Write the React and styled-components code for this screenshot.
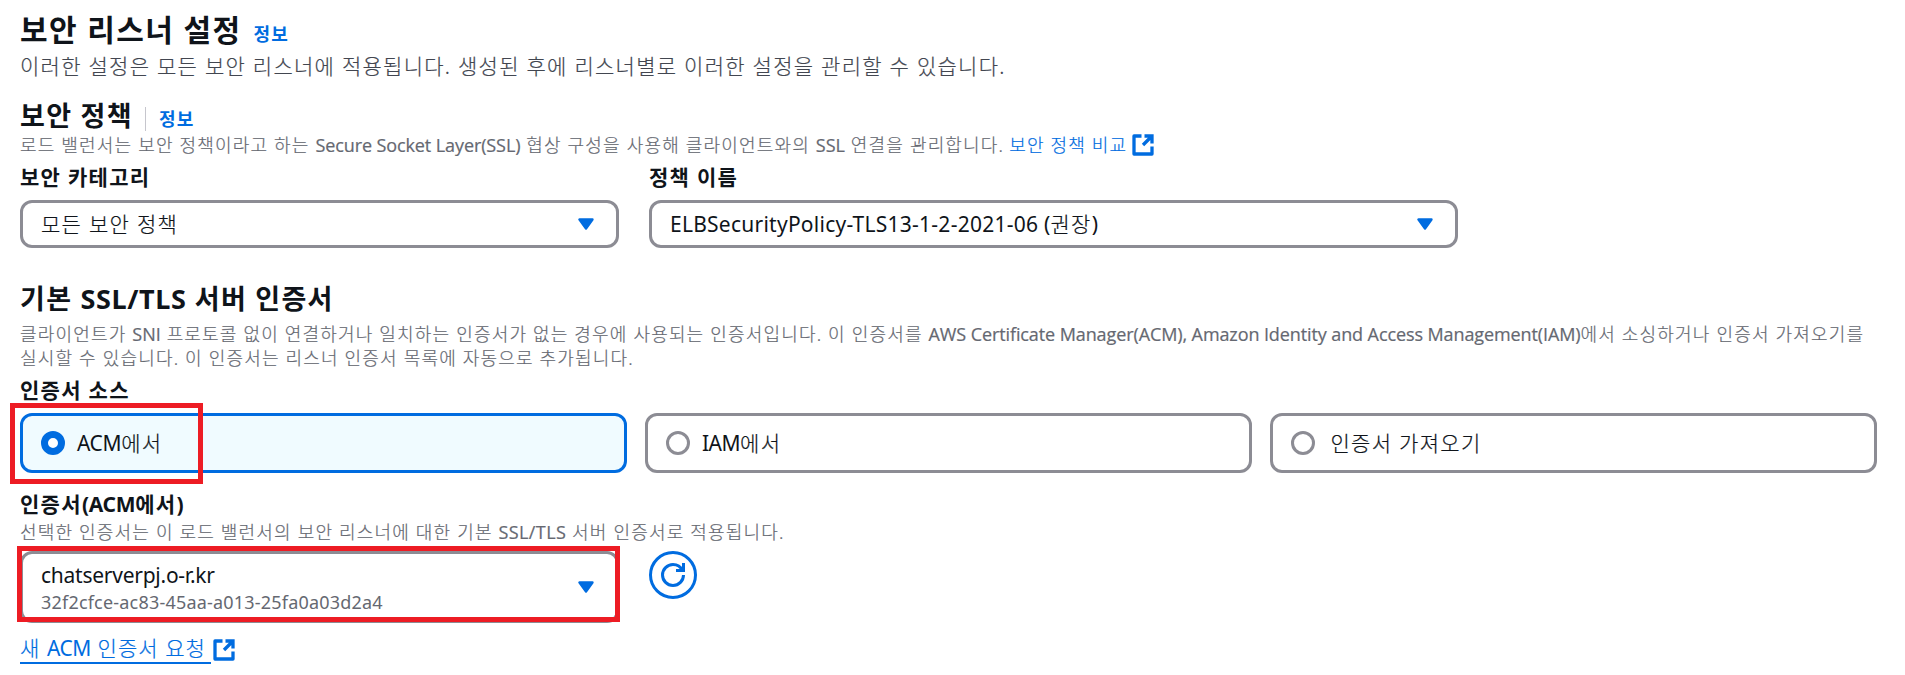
import React from 'react';
import styled, { createGlobalStyle } from 'styled-components';

const c = {
  text: '#0f141a',
  body: '#424650',
  muted: '#656871',
  blue: '#006ce0',
  line: '#8c8c94',
  mark: '#ed1c24',
};

const Global = createGlobalStyle`
  * { box-sizing: border-box; }
  body {
    margin: 0;
    background: #fff;
    color: ${c.text};
    font-family: "Noto Sans", "Noto Sans CJK KR", sans-serif;
  }
`;

const Page = styled.main`
  width: 1905px;
  height: 675px;
  padding: 12px 28px 0 20px;
  overflow: hidden;
  white-space: nowrap;
`;

const HeaderRow = styled.header`
  display: flex;
  align-items: baseline;
  gap: ${(p) => p.$gap}px;
  margin-top: ${(p) => p.$top || 0}px;
`;

const Title = styled.h1`
  margin: 0;
  font-size: 30px;
  line-height: 36px;
  font-weight: 700;
  letter-spacing: 1.4px;
`;

const Subtitle = styled.h2`
  margin: ${(p) => p.$top || 0}px 0 0;
  font-size: 27px;
  line-height: 30px;
  font-weight: 700;
  letter-spacing: 1.3px;
`;

const InfoLink = styled.a`
  color: ${c.blue};
  font-size: 18px;
  line-height: 24px;
  font-weight: 700;
  letter-spacing: 1.2px;
`;

const Divider = styled.span`
  align-self: flex-end;
  width: 1px;
  height: 24px;
  margin: 0 13px 0 12px;
  background: #c6c6cd;
`;

const Lead = styled.p`
  margin: 3px 0 0;
  color: ${c.body};
  font-size: 21px;
  line-height: 30px;
  font-weight: 300;
  letter-spacing: 1.27px;
  -webkit-text-stroke: 0.2px currentColor;
`;

const Note = styled.p`
  display: ${(p) => (p.$inline ? 'flex' : 'block')};
  align-items: center;
  margin: ${(p) => p.$top || 0}px 0 0;
  color: ${c.muted};
  font-size: 18px;
  line-height: 24px;
  font-weight: 300;
  letter-spacing: 1.18px;
  -webkit-text-stroke: 0.2px currentColor;
`;

const Latin = styled.span`
  font-weight: ${(p) => p.$weight || 400};
  letter-spacing: ${(p) => p.$track || 0}px;
  -webkit-text-stroke: 0;
`;

const NoteLatin = styled(Latin)`
  font-family: "Open Sans", "Noto Sans", sans-serif;
  -webkit-text-stroke: 0.2px currentColor;
`;

const NoteLink = styled.a`
  display: inline-flex;
  align-items: center;
  gap: 4px;
  margin-left: 5px;
  color: ${c.blue};
`;

const Label = styled.div`
  margin: ${(p) => p.$top}px 0 0;
  font-size: 21px;
  line-height: 30px;
  font-weight: 700;
  letter-spacing: 1.3px;
`;

const Fields = styled.div`
  display: flex;
  gap: 30px;
  margin-top: ${(p) => p.$top || 0}px;
`;

const Field = styled.div`
  width: ${(p) => p.$w}px;
`;

const SelectBox = styled.div`
  display: flex;
  align-items: center;
  justify-content: space-between;
  height: ${(p) => (p.$tall ? 72 : 48)}px;
  margin-top: ${(p) => (p.$tall ? 0 : 8)}px;
  padding: 0 22px 0 18px;
  border: 3px solid ${c.line};
  border-radius: 12px;
`;

const Value = styled.span`
  display: block;
  padding-bottom: ${(p) => (p.$flush ? 0 : 1)}px;
  font-size: 21px;
  line-height: 30px;
  font-weight: 300;
  letter-spacing: 1.3px;
  -webkit-text-stroke: 0.2px currentColor;
`;

const SubValue = styled.span`
  display: block;
  color: ${c.muted};
  font-size: 18px;
  line-height: 24px;
  letter-spacing: 0.2px;
`;

const Tiles = styled.div`
  display: grid;
  grid-template-columns: repeat(3, 1fr);
  gap: 18px;
  margin-top: 8px;
`;

const Tile = styled.div`
  position: relative;
  display: flex;
  align-items: center;
  gap: 12px;
  height: 60px;
  padding: 0 18px;
  border: 3px solid ${(p) => (p.$on ? c.blue : c.line)};
  border-radius: 12px;
  background: ${(p) => (p.$on ? '#f0fbff' : '#fff')};
`;

const Radio = styled.span`
  width: 24px;
  height: 24px;
  border: ${(p) => (p.$on ? `7px solid ${c.blue}` : `3px solid ${c.line}`)};
  border-radius: 50%;
  background: #fff;
`;

const Marked = styled.div`
  position: relative;
  width: 599px;
`;

const TileMark = styled.div`
  position: absolute;
  top: -13px;
  left: -13px;
  width: 193px;
  height: 81px;
  border: 5px solid ${c.mark};
`;

const SelectMark = styled.div`
  position: absolute;
  top: -5px;
  left: -3px;
  width: 603px;
  height: 76px;
  border: 5px solid ${c.mark};
`;

const RoundButton = styled.button`
  display: flex;
  align-items: center;
  justify-content: center;
  width: 48px;
  height: 48px;
  padding: 0;
  border: 3px solid ${c.blue};
  border-radius: 50%;
  background: #fff;
`;

const RequestLink = styled.a`
  display: flex;
  align-items: flex-start;
  gap: 1px;
  margin-top: 10px;
  color: ${c.blue};

  svg { margin-top: 5px; }
`;

const RequestText = styled.span`
  width: 191px;
  height: 31px;
  border-bottom: 2px solid ${c.blue};
  font-size: 21px;
  line-height: 30px;
  font-weight: 300;
  letter-spacing: 1.05px;
  -webkit-text-stroke: 0.2px currentColor;
`;

const Caret = () => (
  <svg width="16" height="12" viewBox="0 0 16 12">
    <path d="M1.5 1.5h13L8 10.5z" fill={c.blue} stroke={c.blue} strokeWidth="2.4" strokeLinejoin="round" />
  </svg>
);

const External = () => (
  <svg width="24" height="24" viewBox="0 0 16 16" fill="none" stroke={c.blue} strokeWidth="2.2">
    <path d="M14 9v5H2V2h5" strokeLinejoin="round" />
    <path d="M9 2h5v5M14 2L8 8" />
  </svg>
);

const Refresh = () => (
  <svg width="24" height="24" viewBox="0 0 16 16" fill="none" stroke={c.blue} strokeWidth="2">
    <path d="M15 8c0 3.87-3.13 7-7 7s-7-3.13-7-7 3.13-7 7-7c2.79 0 5.2 1.63 6.33 4" />
    <path d="M10 5h5V0" />
  </svg>
);

export default function App() {
  return (
    <>
      <Global />
      <Page>
        <HeaderRow $gap={12}>
          <Title>보안 리스너 설정</Title>
          <InfoLink>정보</InfoLink>
        </HeaderRow>
        <Lead>이러한 설정은 모든 보안 리스너에 적용됩니다. 생성된 후에 리스너별로 이러한 설정을 관리할 수 있습니다.</Lead>

        <HeaderRow $gap={0} $top={20}>
          <Subtitle>보안 정책</Subtitle>
          <Divider />
          <InfoLink>정보</InfoLink>
        </HeaderRow>
        <Note $inline $top={2}>
          <span>
            로드 밸런서는 보안 정책이라고 하는 <NoteLatin $track={-0.1}>Secure Socket Layer(SSL)</NoteLatin> 협상 구성을
            사용해 클라이언트와의 <NoteLatin>SSL</NoteLatin> 연결을 관리합니다.
          </span>
          <NoteLink>
            보안 정책 비교 <External />
          </NoteLink>
        </Note>

        <Fields>
          <Field $w={599}>
            <Label $top={5}>보안 카테고리</Label>
            <SelectBox>
              <Value>모든 보안 정책</Value>
              <Caret />
            </SelectBox>
          </Field>
          <Field $w={809}>
            <Label $top={5}>정책 이름</Label>
            <SelectBox>
              <Value $flush>
                <Latin $track={0.25}>ELBSecurityPolicy-TLS13-1-2-2021-06 (</Latin>권장<Latin>)</Latin>
              </Value>
              <Caret />
            </SelectBox>
          </Field>
        </Fields>

        <Subtitle $top={36}>
          기본 <Latin $weight={700} $track={0.6}>SSL/TLS</Latin> 서버 인증서
        </Subtitle>
        <Note $top={8}>
          클라이언트가 <NoteLatin>SNI</NoteLatin> 프로토콜 없이 연결하거나 일치하는 인증서가 없는 경우에 사용되는 인증서입니다. 이
          인증서를{' '}
          <NoteLatin $track={-0.1}>
            AWS Certificate Manager(ACM), Amazon Identity and Access Management(IAM)
          </NoteLatin>
          에서 소싱하거나 인증서 가져오기를
          <br />
          실시할 수 있습니다. 이 인증서는 리스너 인증서 목록에 자동으로 추가됩니다.
        </Note>

        <Label $top={5}>인증서 소스</Label>
        <Tiles>
          <Tile $on>
            <Radio $on />
            <Value>
              <Latin $track={-0.4}>ACM</Latin>에서
            </Value>
            <TileMark />
          </Tile>
          <Tile>
            <Radio />
            <Value>
              <Latin $track={-0.5}>IAM</Latin>에서
            </Value>
          </Tile>
          <Tile>
            <Radio />
            <Value>&#8202;인증서 가져오기</Value>
          </Tile>
        </Tiles>

        <Label $top={16}>
          인증서<Latin $weight={700} $track={-0.3}>(ACM</Latin>에서<Latin $weight={700}>)</Latin>
        </Label>
        <Note $top={1}>
          선택한 인증서는 이 로드 밸런서의 보안 리스너에 대한 기본 <NoteLatin $track={0.4}>SSL/TLS</NoteLatin> 서버 인증서로
          적용됩니다.
        </Note>
        <Fields $top={7}>
          <Marked>
            <SelectBox $tall>
              <div>
                <Value $flush>
                  <Latin $track={-0.25}>chatserverpj.o-r.kr</Latin>
                </Value>
                <SubValue>32f2cfce-ac83-45aa-a013-25fa0a03d2a4</SubValue>
              </div>
              <Caret />
            </SelectBox>
            <SelectMark />
          </Marked>
          <RoundButton>
            <Refresh />
          </RoundButton>
        </Fields>

        <RequestLink>
          <RequestText>
            새 <Latin $track={-0.4}>ACM</Latin> 인증서 요청
          </RequestText>
          <External />
        </RequestLink>
      </Page>
    </>
  );
}
